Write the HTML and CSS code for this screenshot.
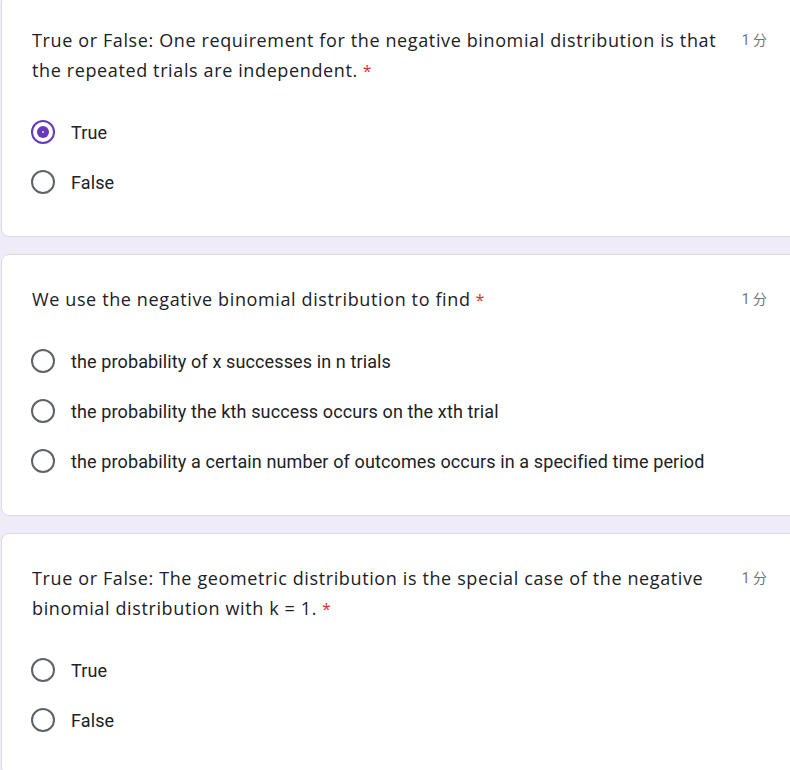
FILE: index.html
```html
<!DOCTYPE html>
<html lang="zh-CN">
<head>
  <meta charset="UTF-8">
  <meta name="viewport" content="width=device-width, initial-scale=1.0">
  <title>Negative binomial quiz</title>
  <link rel="stylesheet" href="styles.css">
</head>
<body>
  <div class="form">

    <div class="card first">
      <div class="question">
        <div class="title">True or False: One requirement for the negative binomial distribution is that the repeated trials are independent.<span class="required">*</span></div>
        <div class="points">1 分</div>
      </div>
      <div class="options">
        <label class="option"><span class="radio checked"></span><span class="label">True</span></label>
        <label class="option"><span class="radio"></span><span class="label">False</span></label>
      </div>
    </div>

    <div class="card">
      <div class="question">
        <div class="title">We use the negative binomial distribution to find<span class="required">*</span></div>
        <div class="points">1 分</div>
      </div>
      <div class="options">
        <label class="option"><span class="radio"></span><span class="label">the probability of x successes in n trials</span></label>
        <label class="option"><span class="radio"></span><span class="label">the probability the kth success occurs on the xth trial</span></label>
        <label class="option"><span class="radio"></span><span class="label">the probability a certain number of outcomes occurs in a specified time period</span></label>
      </div>
    </div>

    <div class="card">
      <div class="question">
        <div class="title">True or False: The geometric distribution is the special case of the negative binomial distribution with k = 1.<span class="required">*</span></div>
        <div class="points">1 分</div>
      </div>
      <div class="options">
        <label class="option"><span class="radio"></span><span class="label">True</span></label>
        <label class="option"><span class="radio"></span><span class="label">False</span></label>
      </div>
    </div>

  </div>
</body>
</html>
```

FILE: styles.css
```css
* {
  margin: 0;
  padding: 0;
  box-sizing: border-box;
}

body {
  background: #f0ebf8;
  overflow: hidden;
  font-family: Roboto, 'Liberation Sans', Arial, sans-serif;
  color: #202124;
}

.form {
  width: 810px;
  padding-left: 1px;
}

.card {
  background: #fff;
  border: 1px solid #dadce0;
  border-radius: 8px;
  padding: 29px 42px 29px 30px;
  margin-bottom: 17px;
}

.card.first {
  margin-top: -5px;
}

.question {
  display: flex;
  align-items: flex-start;
}

.title {
  flex: 1;
  font-family: 'Open Sans', 'Liberation Sans', sans-serif;
  font-size: 18px;
  line-height: 30px;
  letter-spacing: 0.62px;
}

.required {
  color: #d93025;
  font-size: 16px;
  line-height: 1;
  letter-spacing: 0;
  margin-left: 5px;
}

.points {
  margin-left: 10px;
  font-family: Roboto, 'Noto Sans CJK SC', sans-serif;
  font-size: 14px;
  line-height: 30px;
  color: #70757a;
  white-space: nowrap;
}

.options {
  margin-top: 22px;
}

.option {
  display: flex;
  align-items: center;
  height: 50px;
}

.radio {
  width: 24px;
  height: 24px;
  margin-left: -1px;
  margin-right: 16px;
  border: 2.5px solid #5f6368;
  border-radius: 50%;
  display: flex;
  justify-content: center;
  align-items: center;
  flex-shrink: 0;
}

.radio.checked {
  border-color: #673ab7;
}

.radio.checked::after {
  content: '';
  width: 12px;
  height: 12px;
  border-radius: 50%;
  background: radial-gradient(circle, #c9b8e8 0, #c9b8e8 1px, #673ab7 1.5px);
}

.label {
  font-size: 18px;
  letter-spacing: 0.12px;
}
```
